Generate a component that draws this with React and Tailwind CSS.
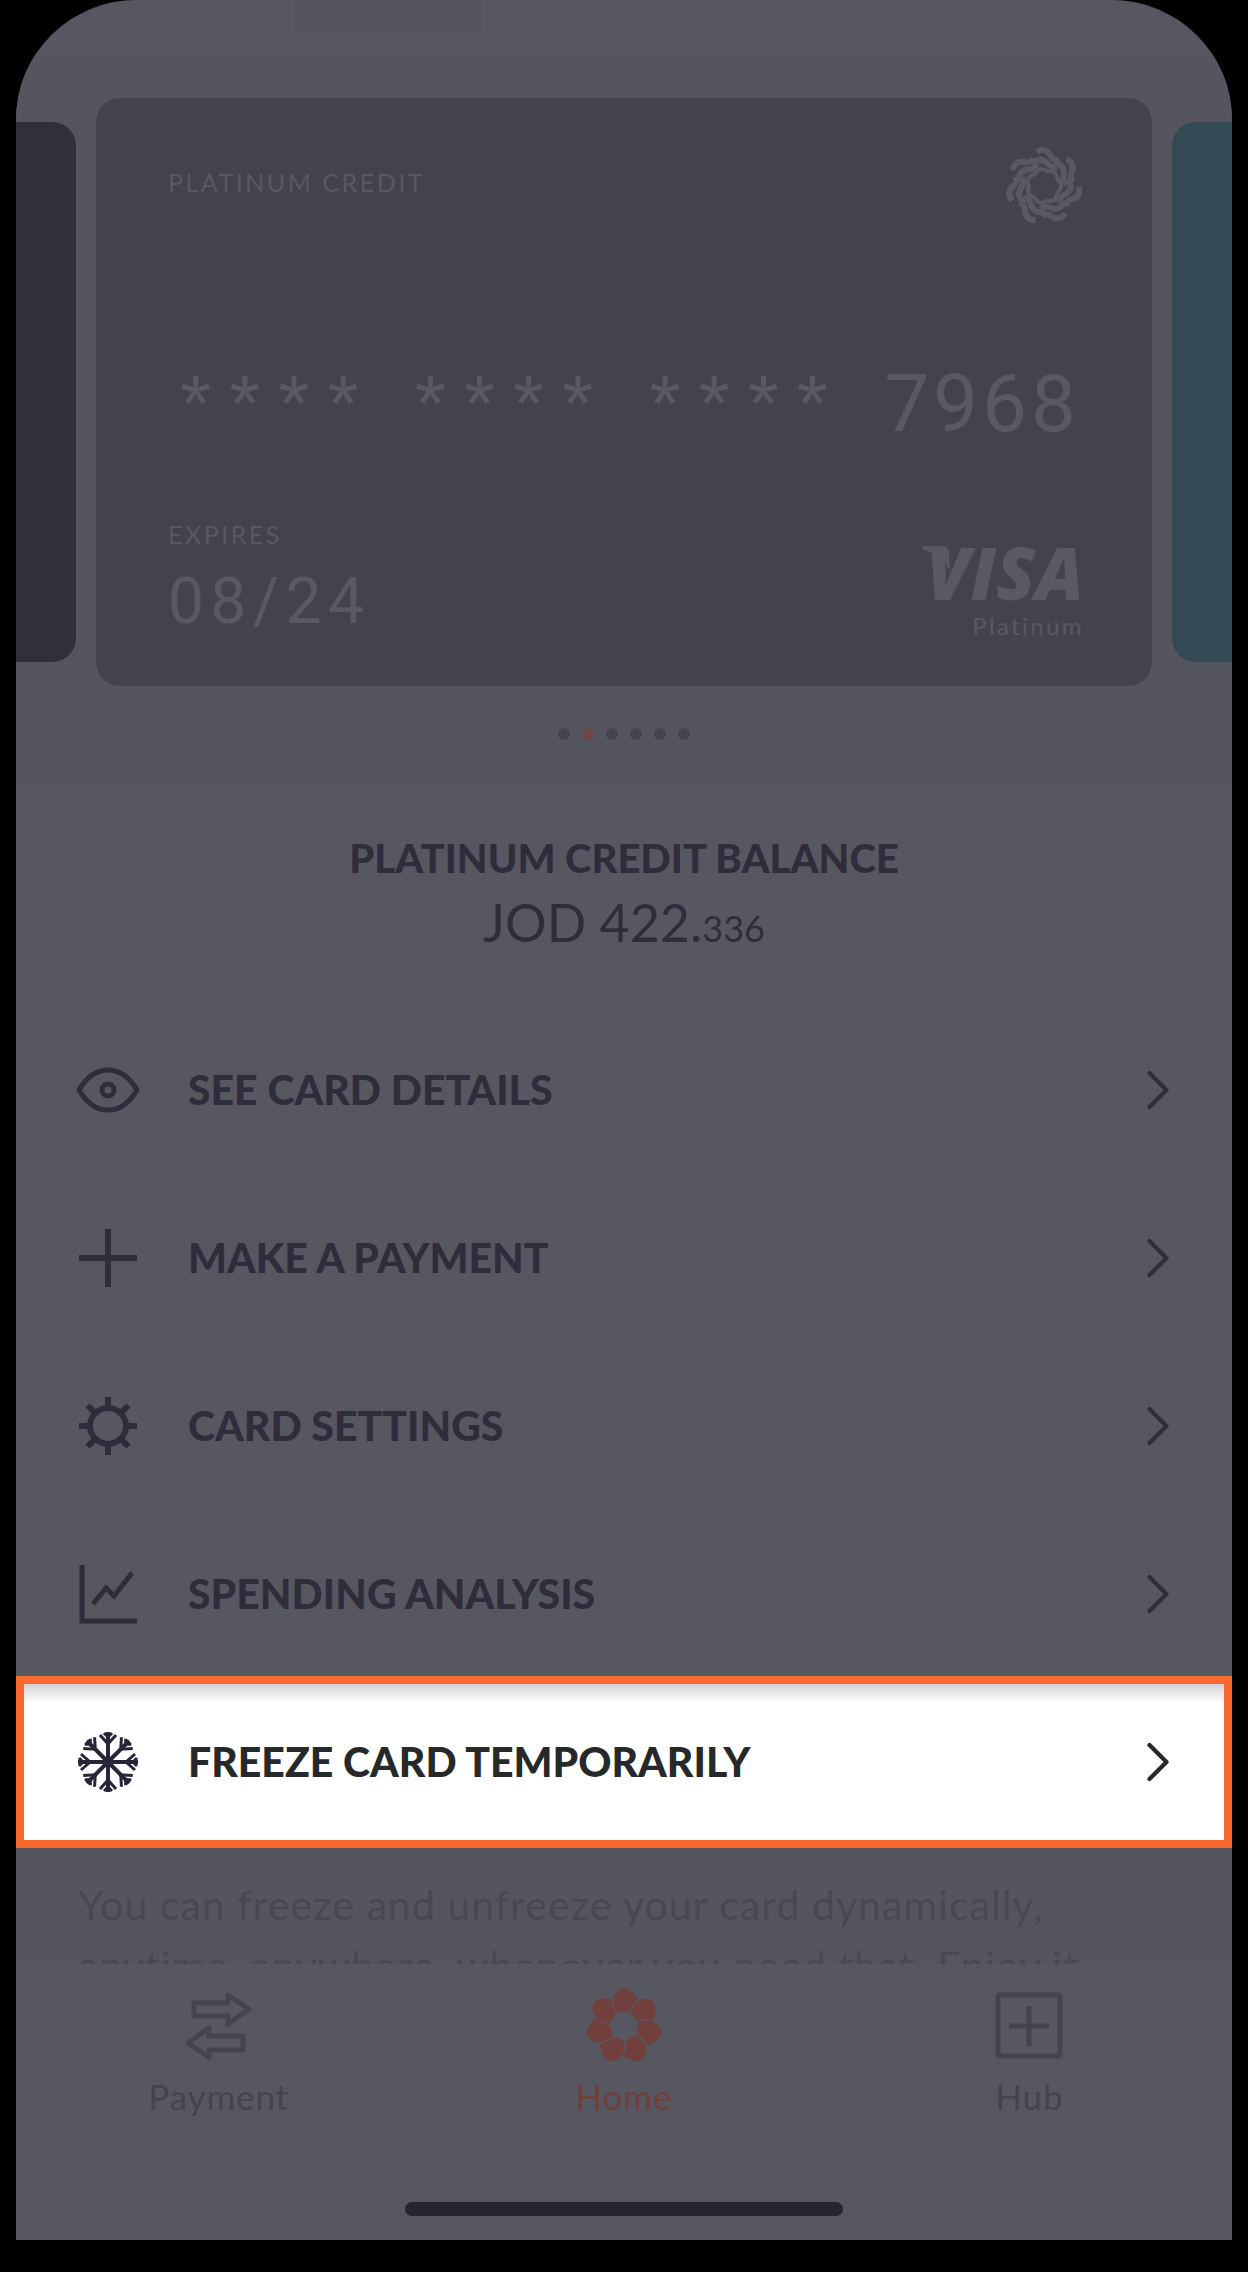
import { ChevronRight } from "lucide-react";

const cardDots = [0, 1, 2, 3, 4, 5];
const petals = [0, 1, 2, 3, 4, 5, 6];
const spokes = [0, 45, 90, 135, 180, 225, 270, 315];

function RosetteLogo() {
  return (
    <svg width="80" height="80" viewBox="-40 -40 80 80" fill="none" stroke="currentColor" aria-hidden="true">
      {petals.map((p) => (
        <g key={p} transform={`rotate(${(p * 360) / 7})`}>
          <path strokeWidth="6" d="M-7 -34C-1 -38 4 -35 6 -31S10 -25 15 -26" />
          <path strokeWidth="6" d="M-12 -22C-7 -28 -1 -27 3 -23S8 -18 13 -19" />
          <path strokeWidth="4" d="M-9 -12C-6 -18 -1 -18 5 -14" />
        </g>
      ))}
    </svg>
  );
}

function EyeIcon() {
  return (
    <svg width="64" height="64" viewBox="0 0 64 64" fill="none" stroke="currentColor" strokeWidth="5" aria-hidden="true">
      <path strokeLinejoin="round" d="M3 32C10 20 20 12 32 12S54 20 61 32C54 44 44 52 32 52S10 44 3 32Z" />
      <circle cx="32" cy="32" r="6" />
    </svg>
  );
}

function PlusIcon() {
  return (
    <svg width="64" height="64" viewBox="0 0 64 64" stroke="currentColor" strokeWidth="6" aria-hidden="true">
      <path d="M32 3V61M3 32H61" />
    </svg>
  );
}

function GearIcon() {
  return (
    <svg width="64" height="64" viewBox="0 0 64 64" fill="none" stroke="currentColor" strokeWidth="6" aria-hidden="true">
      <circle cx="32" cy="32" r="18" />
      {spokes.map((a) => (
        <path key={a} d="M32 15V3" transform={`rotate(${a} 32 32)`} />
      ))}
    </svg>
  );
}

function ChartIcon() {
  return (
    <svg width="64" height="64" viewBox="0 0 64 64" fill="none" stroke="currentColor" strokeWidth="5" aria-hidden="true">
      <path d="M6 3V59H61" />
      <path d="M17 42L30 26L38 34L56 11" />
    </svg>
  );
}

function SnowflakeIcon() {
  return (
    <svg width="64" height="64" viewBox="0 0 64 64" fill="none" stroke="currentColor" strokeWidth="4" aria-hidden="true">
      {spokes.map((a) => (
        <g key={a} transform={`rotate(${a} 32 32)`}>
          <path d="M32 32V2" />
          <path strokeWidth="3" d="M24 5L32 14L40 5M28 3L32 7L36 3" />
        </g>
      ))}
    </svg>
  );
}

function PaymentIcon() {
  return (
    <svg width="72" height="72" viewBox="0 0 72 72" fill="none" stroke="currentColor" strokeWidth="5" strokeLinejoin="round" aria-hidden="true">
      <path d="M11 13H45V5L66 19L45 34V26H11Z" />
      <path d="M60 46H26V38L5 53L26 67V60H60Z" />
    </svg>
  );
}

function HomeIcon() {
  return (
    <svg width="80" height="80" viewBox="-40 -40 80 80" fill="currentColor" aria-hidden="true">
      {petals.map((p) => (
        <path
          key={p}
          d="M-8 -14L-11 -24C-11 -32 -5 -38 0 -38C6 -38 9 -32 14 -27C10 -24 7 -20 4 -14C1 -13 -4 -13 -8 -14Z"
          transform={`rotate(${(p * 360) / 7})`}
        />
      ))}
    </svg>
  );
}

function HubIcon() {
  return (
    <svg width="72" height="72" viewBox="0 0 72 72" fill="none" stroke="currentColor" strokeWidth="5" aria-hidden="true">
      <rect x="5" y="5" width="62" height="61" rx="2" />
      <path d="M36 16V56M16 36H56" />
    </svg>
  );
}

const menu = [
  { label: "See card details", Icon: EyeIcon },
  { label: "Make a payment", Icon: PlusIcon },
  { label: "Card settings", Icon: GearIcon },
  { label: "Spending analysis", Icon: ChartIcon },
  { label: "Freeze card temporarily", Icon: SnowflakeIcon, highlighted: true },
];

const tabs = [
  { label: "Payment", Icon: PaymentIcon },
  { label: "Home", Icon: HomeIcon, active: true },
  { label: "Hub", Icon: HubIcon },
];

function CreditCard() {
  return (
    <article className="flex flex-1 flex-col justify-between rounded-3xl bg-[#44424f] pt-12 pr-[68px] pb-11 pl-[72px] text-[#595863]">
      <div className="flex items-start justify-between">
        <span className="pt-5 text-[25px] leading-8 tracking-widest">PLATINUM CREDIT</span>
        <RosetteLogo />
      </div>
      <div className="flex items-center justify-between pt-16 pr-1 pl-3 font-[Roboto,sans-serif] text-[80px] leading-20">
        {[0, 1, 2].map((g) => (
          <span key={g} className="flex gap-[18px] font-['Liberation_Sans',sans-serif]">
            {[0, 1, 2, 3].map((s) => (
              <span key={s}>*</span>
            ))}
          </span>
        ))}
        <span className="tracking-wider">7968</span>
      </div>
      <div className="flex items-end justify-between">
        <div className="flex flex-col gap-3">
          <span className="text-[25px] leading-8 tracking-widest">EXPIRES</span>
          <span className="font-[Roboto,sans-serif] text-[64px] leading-20 tracking-widest">08/24</span>
        </div>
        <div className="flex flex-col items-end">
          <div className="flex items-start">
            <svg width="28" height="52" viewBox="0 0 28 52" fill="currentColor" className="-mr-6" aria-hidden="true">
              <path d="M0 0H20Q26 0 27 6L28 24C20 12 10 6 0 3Z" />
            </svg>
            <span className="font-['Open_Sans',sans-serif] text-[72px] leading-[52px] font-extrabold italic">VISA</span>
          </div>
          <span className="pt-3 text-[24px] leading-8 tracking-widest">Platinum</span>
        </div>
      </div>
    </article>
  );
}

function MenuRow({ label, Icon, highlighted }) {
  return (
    <li className={highlighted ? "relative -my-[2px] border-8 border-[#f8682f] bg-white" : "px-2"}>
      <button
        className={`flex w-full items-center px-[52px] text-left text-[41px] font-black uppercase ${
          highlighted
            ? "h-[156px] bg-linear-to-b from-[#d0d2d0] to-white to-12% text-[#26282a]"
            : "h-[168px] text-[#2f2d3b]"
        }`}
      >
        <span className={highlighted ? "text-[#262638]" : ""}>
          <Icon />
        </span>
        <span className="flex-1 pl-12">{label}</span>
        <ChevronRight size={68} strokeWidth={1.5} className="-mr-5" />
      </button>
    </li>
  );
}

export default function App() {
  return (
    <div className="min-h-screen bg-black px-4 pb-8 font-[Lato,sans-serif]">
      <main className="flex flex-col overflow-hidden rounded-t-[120px] bg-[#575762]">
        <div className="h-14 pl-[279px]">
          <div className="h-8 w-[188px] bg-[#55555d]" />
        </div>

        <section className="bg-[#55555f] pt-[42px] pb-11" aria-label="Cards">
          <div className="flex h-[588px] items-stretch gap-5">
            <div className="my-6 w-[60px] rounded-r-3xl bg-[#322f3b]" />
            <CreditCard />
            <div className="my-6 w-[60px] rounded-l-3xl bg-[#334954]" />
          </div>
          <div className="flex justify-center gap-3 pt-[42px]">
            {cardDots.map((d) => (
              <span key={d} className={`size-3 rounded-full ${d === 1 ? "bg-[#6b4845]" : "bg-[#464551]"}`} />
            ))}
          </div>
        </section>

        <section className="pt-[50px] pb-[46px] text-center text-[#2f2d3b]">
          <h1 className="text-[40px] leading-12 font-black">PLATINUM CREDIT BALANCE</h1>
          <p className="pt-2 text-[52px] leading-16">
            JOD 422.<span className="text-[36px]">336</span>
          </p>
        </section>

        <ul className="flex flex-col">
          {menu.map((item) => (
            <MenuRow key={item.label} {...item} />
          ))}
        </ul>

        {/* Second line slides under the tab bar */}
        <div className="h-[118px] overflow-hidden bg-[#55555d] px-[62px] pt-7 text-[#484754]">
          <p className="text-[41px] leading-[61px] tracking-wide">
            You can freeze and unfreeze your card dynamically, anytime, anywhere, whenever you need that. Enjoy it
          </p>
        </div>

        <footer className="bg-[#575762] pb-6">
          <nav className="grid grid-cols-3 pt-[22px] pb-[82px]">
            {tabs.map(({ label, Icon, active }) => (
              <a
                key={label}
                href="#"
                className={`flex flex-col items-center gap-1.5 text-[35px] leading-12 tracking-wide ${
                  active ? "text-[#713f3c]" : "text-[#444350]"
                }`}
              >
                <span className="flex h-20 items-center">
                  <Icon />
                </span>
                {label}
              </a>
            ))}
          </nav>
          <div className="mx-auto h-3.5 w-[36%] rounded-full bg-[#252431]" />
        </footer>
      </main>
    </div>
  );
}
